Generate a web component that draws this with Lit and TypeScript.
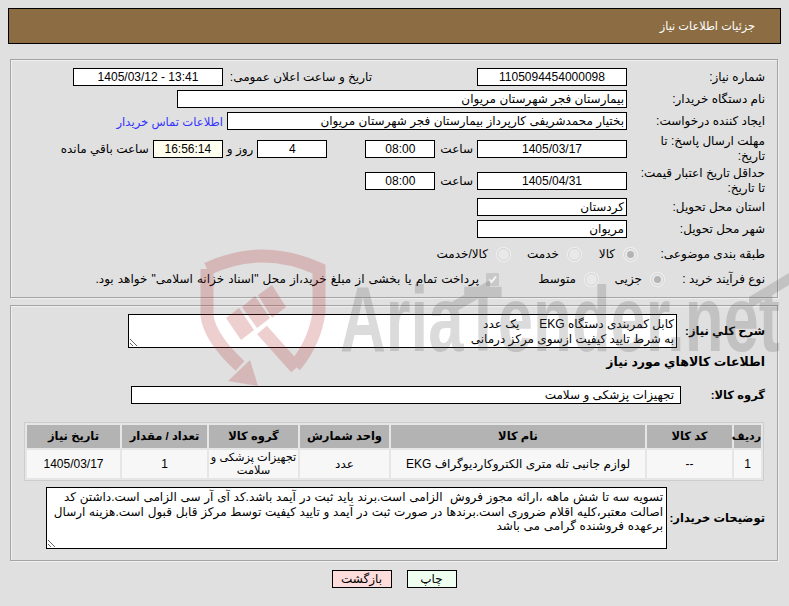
import { LitElement, html, css, svg } from "lit";
import { customElement } from "lit/decorators.js";

const watermark = svg`
<svg class="wm" width="789" height="606" viewBox="0 0 789 606" aria-hidden="true">
  <g opacity="0.22">
    <g fill="none" stroke="#b42828" stroke-width="13">
      <path d="M207 269 Q262 243 319 269 L319 312 Q315 342 295 366"/>
      <path d="M207 269 L207 316 Q210 338 240 366"/>
      <path d="M296 368 L262 330"/>
    </g>
    <polygon points="228,381 258,386 250,360" fill="#b42828"/>
    <g fill="#b42828">
      <polygon points="258,295 272,285 286,307 272,318"/>
      <polygon points="226,318 239,308 254,330 241,340"/>
      <polygon points="242,307 255,296 270,318 257,328"/>
    </g>
  </g>
  <g opacity="0.2" fill="#505050">
    <text x="340" y="351" font-family="Liberation Sans, sans-serif" font-weight="700" font-size="92" textLength="440" lengthAdjust="spacingAndGlyphs" direction="ltr">AriaTender.net</text>
    <polygon points="450,303 490,280 490,292 450,315"/>
    <polygon points="749,297 789,273 789,285 749,309"/>
  </g>
</svg>`;

@customElement("app-root")
export class AppRoot extends LitElement {
  static styles = css`
    :host {
      display: block;
      position: relative;
      height: 606px;
      box-sizing: border-box;
      padding: 8px 8px 0;
      background: #e0e0e0;
      direction: rtl;
      font: 12px/15px "Liberation Sans", "DejaVu Sans", sans-serif;
      color: #000;
      overflow: hidden;
    }
    .wm { position: absolute; left: 0; top: 0; z-index: 2; pointer-events: none; }
    .page { position: relative; z-index: 1; }
    .head {
      height: 36px;
      box-sizing: border-box;
      border: 1px solid #000;
      background: #8c6d43;
      color: #fff;
      font-size: 11.3px;
      padding-right: 25px;
      display: flex;
      align-items: center;
    }
    .panel {
      margin: 15px 3px 0 2px;
      box-sizing: border-box;
      border: 1px solid #a4a4a4;
      box-shadow: inset 1px 1px 0 #efefef, 1px 1px 0 #efefef;
      padding: 8px 12px 0 0;
    }
    .p1 { height: 239px; }
    .p2 { height: 256px; margin-top: 7px; }
    .row { display: flex; align-items: center; height: 18px; margin-top: 4px; }
    .row:first-child { margin-top: 0; }
    .tall { height: 28px; }
    .g5 { margin-top: 5px; }
    .g3 { margin-top: 3px; }
    .g7 { margin-top: 7px; }
    .label { width: 125px; margin-left: 13px; flex: none; text-align: right; }
    .bold { font-weight: 700; font-size: 11.5px; }
    .field {
      height: 18px;
      box-sizing: border-box;
      border: 1px solid #000;
      background: #fff;
      flex: none;
      padding: 0 2px;
      line-height: 16px;
      white-space: nowrap;
      overflow: hidden;
    }
    .c { text-align: center; direction: ltr; }
    .w150 { width: 150px; }
    .w70 { width: 70px; }
    .w400 { width: 400px; }
    .w450 { width: 450px; }
    .warm { background: #ffffef; }
    .txt { margin-right: 4px; white-space: nowrap; flex: none; }
    .gap5 { margin-right: 5px; }
    .gap38 { margin-right: 38px; }
    .gap4 { margin-right: 4px; }
    .m-date { margin-right: 105px; width: 149px; text-align: right; flex: none; }
    a { color: #3333ff; text-decoration: none; margin-right: 4px; white-space: nowrap; font-size: 11.6px; }
    .radio {
      width: 13px;
      height: 13px;
      box-sizing: border-box;
      border-radius: 50%;
      background: #e9e9e9;
      border: 1px solid #d2d2d2;
      box-shadow: 0 0 0 1px #f0f0f0;
      flex: none;
      display: flex;
      align-items: center;
      justify-content: center;
    }
    .radio.on::after {
      content: "";
      width: 7px;
      height: 7px;
      border-radius: 50%;
      background: #b4b4b4;
    }
    .check {
      width: 13px;
      height: 13px;
      background: #c8c8c8;
      flex: none;
      display: flex;
      border-radius: 1px;
    }
    .opts { display: flex; align-items: center; flex: none; margin-right: -10px; }
    .opt-t { margin-right: 9px; white-space: nowrap; flex: none; }
    .w-kala { width: 16px; margin-left: 18px; }
    .w-kh { width: 32px; margin-left: 17px; }
    .w-jz { width: 28px; margin-left: 16px; }
    .w-mt { width: 37px; margin-left: 40px; }
    .pay { margin-right: 7px; word-spacing: 0.8px; }
    .pl { width: 80px; margin-left: 21px; flex: none; text-align: right; white-space: nowrap; }
    textarea {
      display: block;
      box-sizing: border-box;
      border: 1px solid #000;
      background: #fff;
      font: inherit;
      line-height: 14.5px;
      padding: 2px;
      margin: 0;
      outline: none;
      overflow: hidden;
      resize: both;
      flex: none;
      direction: rtl;
      color: #000;
    }
    .ta1 { width: 549px; height: 34px; white-space: pre; }
    .ta2 { width: 621px; height: 62px; padding: 2px 3px; word-spacing: 0.4px; }
    .r-sharh { height: 34px; margin-top: 0; }
    .l-sharh { width: 88px; flex: none; text-align: right; white-space: nowrap; }
    .heading { height: 16px; margin-top: 6px; line-height: 16px; font-size: 12.5px; }
    .r-group { margin-top: 16px; }
    .l-group { width: 84px; flex: none; text-align: right; }
    .g550 { width: 550px; padding-right: 6px; }
    table {
      margin: 18px 1px 0 0;
      width: 740px;
      box-sizing: border-box;
      table-layout: fixed;
      border: 1px solid #cdcdcd;
      border-spacing: 2px;
      background: #e6e6e6;
    }
    th, td { padding: 0; text-align: center; white-space: nowrap; }
    th { height: 23px; background: #b3b3b3; font-size: 11.5px; font-weight: 700; }
    .th-n { font-size: 11px; }
    td { height: 28px; background: #f7f7f7; line-height: 13px; font-size: 12px; }
    .td-g { font-size: 11.3px; }
    .r-desc { height: 62px; margin-top: 6px; }
    .l-desc { width: 98px; flex: none; text-align: right; white-space: nowrap; }
    .btns { display: flex; justify-content: center; margin-top: 9px; gap: 15px; padding-right: 1px; }
    .btn {
      height: 18px;
      box-sizing: border-box;
      border: 1px solid #000;
      text-align: center;
      line-height: 16px;
    }
    .print { width: 50px; background: #efffef; }
    .back { width: 60px; background: #ffdcdc; }
  `;

  render() {
    return html`
      <div class="page">
        <div class="head">جزئیات اطلاعات نیاز</div>

        <div class="panel p1">
          <div class="row">
            <div class="label">شماره نیاز:</div>
            <div class="field c w150">1105094454000098</div>
            <div class="m-date">تاریخ و ساعت اعلان عمومی:</div>
            <div class="field c w150">1405/03/12 - 13:41</div>
          </div>
          <div class="row">
            <div class="label">نام دستگاه خریدار:</div>
            <div class="field w450">بیمارستان فجر شهرستان مریوان</div>
          </div>
          <div class="row">
            <div class="label">ایجاد کننده درخواست:</div>
            <div class="field w400">بختیار محمدشریفی کارپرداز بیمارستان فجر شهرستان مریوان</div>
            <a href="#">اطلاعات تماس خریدار</a>
          </div>
          <div class="row tall g5">
            <div class="label">مهلت ارسال پاسخ: تا تاریخ:</div>
            <div class="field c w150">1405/03/17</div>
            <div class="txt">ساعت</div>
            <div class="field c w70 gap5">08:00</div>
            <div class="field c w70 gap38">4</div>
            <div class="txt">روز و</div>
            <div class="field c w70 warm gap4">16:56:14</div>
            <div class="txt">ساعت باقي مانده</div>
          </div>
          <div class="row tall">
            <div class="label">حداقل تاریخ اعتبار قیمت: تا تاریخ:</div>
            <div class="field c w150">1405/04/31</div>
            <div class="txt">ساعت</div>
            <div class="field c w70 gap5">08:00</div>
          </div>
          <div class="row g3">
            <div class="label">استان محل تحویل:</div>
            <div class="field w150">کردستان</div>
          </div>
          <div class="row">
            <div class="label">شهر محل تحویل:</div>
            <div class="field w150">مریوان</div>
          </div>
          <div class="row g7">
            <div class="label">طبقه بندی موضوعی:</div>
            <div class="opts">
              <span class="radio on"></span>
              <span class="opt-t w-kala">کالا</span>
              <span class="radio"></span>
              <span class="opt-t w-kh">خدمت</span>
              <span class="radio"></span>
              <span class="opt-t">کالا/خدمت</span>
            </div>
          </div>
          <div class="row g7">
            <div class="pl">نوع فرآیند خرید :</div>
            <span class="radio on"></span>
            <span class="opt-t w-jz">جزیی</span>
            <span class="radio"></span>
            <span class="opt-t w-mt">متوسط</span>
            <span class="check">
              <svg width="13" height="13" viewBox="0 0 13 13"><path d="M3 6.5 L5.5 9 L10 3.5" fill="none" stroke="#f2f2f2" stroke-width="2"/></svg>
            </span>
            <span class="opt-t pay">پرداخت تمام یا بخشی از مبلغ خرید،از محل "اسناد خزانه اسلامی" خواهد بود.</span>
          </div>
        </div>

        <div class="panel p2">
          <div class="row r-sharh">
            <div class="l-sharh bold">شرح کلي نیاز:</div>
            <textarea class="ta1" readonly>کابل کمربندی دستگاه EKG      یک عدد
به شرط تایید کیفیت ازسوی مرکز درمانی</textarea>
          </div>
          <div class="heading bold">اطلاعات کالاهاي مورد نیاز</div>
          <div class="row r-group">
            <div class="l-group bold">گروه کالا:</div>
            <div class="field g550">تجهیزات پزشکی و سلامت</div>
          </div>
          <table>
            <colgroup>
              <col style="width:27px" /><col style="width:85px" /><col style="width:254px" />
              <col style="width:89px" /><col style="width:89px" /><col style="width:85px" />
              <col style="width:93px" />
            </colgroup>
            <thead>
              <tr>
                <th class="th-n">ردیف</th><th>کد کالا</th><th>نام کالا</th><th>واحد شمارش</th>
                <th>گروه کالا</th><th>تعداد / مقدار</th><th>تاریخ نیاز</th>
              </tr>
            </thead>
            <tbody>
              <tr>
                <td>1</td><td>--</td><td>لوازم جانبی تله متری الکتروکاردیوگراف EKG</td><td>عدد</td>
                <td class="td-g">تجهیزات پزشکی و<br />سلامت</td><td>1</td><td>1405/03/17</td>
              </tr>
            </tbody>
          </table>
          <div class="row r-desc">
            <div class="l-desc bold">توضیحات خریدار:</div>
            <textarea class="ta2" readonly>تسویه سه تا شش ماهه ،ارائه مجوز فروش  الزامی است.برند باید ثبت در آیمد باشد.کد آی آر سی الزامی است.داشتن کد اصالت معتبر،کلیه اقلام ضروری است.برندها در صورت ثبت در آیمد و تایید کیفیت توسط مرکز قابل قبول است.هزینه ارسال برعهده فروشنده گرامی می باشد</textarea>
          </div>
        </div>

        <div class="btns">
          <div class="btn print">چاپ</div>
          <div class="btn back">بازگشت</div>
        </div>
      </div>
      ${watermark}
    `;
  }
}
